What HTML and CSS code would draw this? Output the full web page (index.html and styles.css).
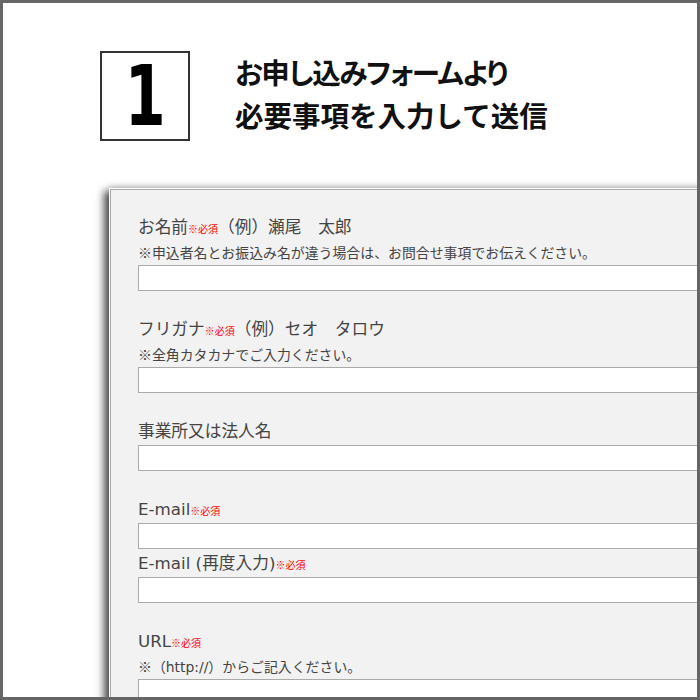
FILE: index.html
```html
<!DOCTYPE html>
<html lang="ja">
  <head>
    <meta charset="UTF-8" />
    <meta name="viewport" content="width=device-width, initial-scale=1.0" />
    <title>お申し込みフォーム</title>
    <link rel="stylesheet" href="styles.css">
  </head>
  <body>
    <div class="frame">
      <div class="step">
        <div class="step-number"><span>1</span></div>
        <h2 class="step-title">
          <span class="step-line-1">お申し込みフォームより</span><br />必要事項を入力して送信
        </h2>
      </div>

      <!-- Form panel -->
      <div class="panel">
        <div class="form-group">
          <label for="name">お名前<span class="required">※必須</span>（例）瀬尾　太郎</label>
          <p class="note">※申込者名とお振込み名が違う場合は、お問合せ事項でお伝えください。</p>
          <input type="text" id="name" />
        </div>

        <div class="form-group">
          <label for="kana">フリガナ<span class="required">※必須</span>（例）セオ　タロウ</label>
          <p class="note">※全角カタカナでご入力ください。</p>
          <input type="text" id="kana" />
        </div>

        <div class="form-group">
          <label for="company">事業所又は法人名</label>
          <input type="text" id="company" />
        </div>

        <div class="form-group">
          <label for="email">E-mail<span class="required">※必須</span></label>
          <input type="email" id="email" />
          <label for="email2">E-mail (再度入力)<span class="required">※必須</span></label>
          <input type="email" id="email2" />
        </div>

        <div class="form-group">
          <label for="url">URL<span class="required">※必須</span></label>
          <p class="note">※（<span class="latin">http://</span>）からご記入ください。</p>
          <input type="text" id="url" />
        </div>
      </div>
    </div>
  </body>
</html>
```

FILE: styles.css
```css
/* Global Styles */
body {
  margin: 0;
  font-family: "DejaVu Sans", "Noto Sans CJK JP", sans-serif;
  background-color: #ffffff;
}

.frame {
  width: 700px;
  height: 700px;
  box-sizing: border-box;
  border: 3px solid #666666;
  overflow: hidden;
  background: #ffffff;
}

/* Step heading */
.step {
  display: flex;
  align-items: center;
  margin: 48px 0 0 97px;
}

.step-number {
  width: 86px;
  height: 86px;
  border: 2px solid #333333;
  display: flex;
  align-items: center;
  justify-content: center;
  font-family: "DejaVu Sans", sans-serif;
  font-weight: 700;
  font-size: 84px;
  line-height: 1;
  color: #000000;
}

.step-number span {
  display: block;
  transform: scaleX(0.7);
}

.step-title {
  margin: -6px 0 0 45px;
  font-family: "Noto Sans CJK JP", sans-serif;
  font-size: 28.5px;
  font-weight: 700;
  line-height: 43px;
  color: #111111;
}

.step-line-1 {
  font-feature-settings: "palt";
  letter-spacing: -1.3px;
}

/* Form panel */
.panel {
  width: 640px;
  margin: 48px 0 0 107px;
  padding: 23px 0 0 27px;
  background: #f2f2f2;
  border: 1px solid #a8a8a8;
  box-shadow: 0 0 0 1px #ffffff, -8px 0 8px -2px rgba(0, 0, 0, 0.7),
    0 -3px 6px rgba(0, 0, 0, 0.15);
}

.form-group {
  margin-bottom: 24px;
}

label {
  display: block;
  font-size: 16.7px;
  line-height: 28px;
  height: 28px;
  color: #444444;
}

.required {
  font-family: "Noto Sans CJK JP", sans-serif;
  font-size: 10px;
  line-height: 1;
  color: #ff0000;
}

.note {
  margin: 0;
  font-family: "Noto Sans CJK JP", sans-serif;
  font-size: 13.9px;
  line-height: 22px;
  height: 24px;
  color: #444444;
}

.latin {
  font-family: "DejaVu Sans", sans-serif;
}

input {
  display: block;
  width: 100%;
  height: 26px;
  box-sizing: border-box;
  margin: 0;
  border: 1px solid #aaaaaa;
  background: #ffffff;
}
```
